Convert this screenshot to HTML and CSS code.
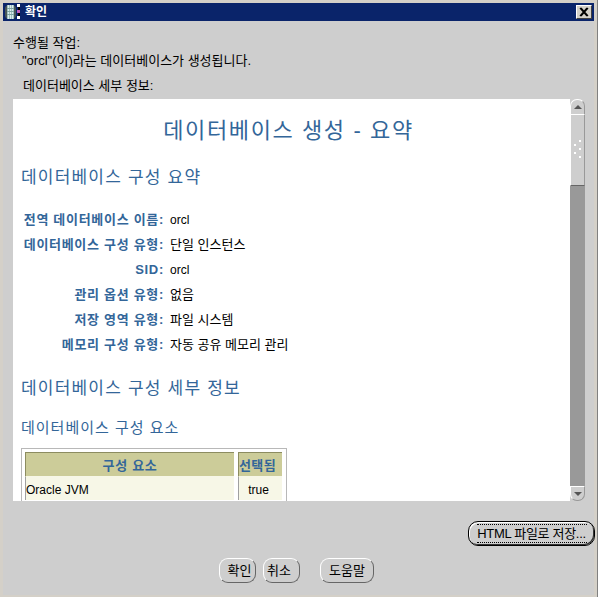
FILE: index.html
```html
<!DOCTYPE html>
<html lang="ko">
<head>
<meta charset="utf-8">
<title>확인</title>
<link rel="stylesheet" href="styles.css">
</head>
<body>
<div class="window">
  <div class="titlebar">
    <svg class="app-icon" width="18" height="18" viewBox="0 0 18 18">
      <rect x="0" y="2" width="11" height="14" rx="4" fill="#4a5656"/>
      <rect x="2" y="2" width="7" height="14" fill="#9fc0be"/>
      <path d="M3.500 2v14M5.500 2v14M7.500 2v14" stroke="#dcecec" stroke-width="1"/>
      <path d="M2 5.500h7M2 8.500h7M2 11.500h7" stroke="#7fa5a3" stroke-width="1"/>
      <rect x="12" y="1" width="3" height="3" fill="#fff"/>
      <rect x="12" y="7" width="3" height="3" fill="#c060c0"/>
      <rect x="12" y="13" width="3" height="3" fill="#fff"/>
      <rect x="13" y="4" width="2" height="3" fill="#000"/>
      <rect x="13" y="10" width="2" height="3" fill="#000"/>
    </svg>
    <span class="title">확인</span>
    <span class="close">
      <svg width="12" height="10" viewBox="0 0 12 10"><path d="M2 1l7 8M3 1l7 8M9 1L2 9M10 1L3 9" stroke="#000" stroke-width="1.2" fill="none"/></svg>
    </span>
  </div>
  <div class="body">
    <div class="intro">
      <p class="intro-line">수행될 작업:</p>
      <p class="intro-line indent">"orcl"(이)라는 데이터베이스가 생성됩니다.</p>
      <p class="intro-line details">데이터베이스 세부 정보:</p>
    </div>
    <div class="viewer">
      <div class="doc">
        <h1 class="doc-title">데이터베이스 생성 - 요약</h1>
        <h2 class="section first">데이터베이스 구성 요약</h2>
        <dl class="summary">
          <dt>전역 데이터베이스 이름:</dt><dd class="latin">orcl</dd>
          <dt>데이터베이스 구성 유형:</dt><dd>단일 인스턴스</dd>
          <dt>SID:</dt><dd class="latin">orcl</dd>
          <dt>관리 옵션 유형:</dt><dd>없음</dd>
          <dt>저장 영역 유형:</dt><dd>파일 시스템</dd>
          <dt>메모리 구성 유형:</dt><dd>자동 공유 메모리 관리</dd>
        </dl>
        <h2 class="section second">데이터베이스 구성 세부 정보</h2>
        <h3 class="subsection">데이터베이스 구성 요소</h3>
        <div class="table-frame">
          <table class="components">
            <tr><th class="col-name">구성 요소</th><th class="col-sel">선택됨</th></tr>
            <tr><td>Oracle JVM</td><td class="center">true</td></tr>
          </table>
        </div>
      </div>
      <div class="scrollbar">
        <div class="sb-btn sb-up"><span class="arrow-up"></span></div>
        <div class="sb-thumb">
          <svg class="grip" width="9" height="20" viewBox="0 0 9 20">
            <path d="M6 0h2v2H6zM1 4h2v2H1zM6 8h2v2H6zM1 12h2v2H1zM6 16h2v2H6z" fill="#fff"/>
          </svg>
        </div>
        <div class="sb-track"></div>
        <div class="sb-btn sb-down"><span class="arrow-down"></span></div>
      </div>
    </div>
    <div class="save-row"><button class="btn btn-save"><span class="focus">HTML 파일로 저장...</span></button></div>
    <div class="action-row">
      <button class="btn btn-ok">확인</button>
      <button class="btn btn-cancel">취소</button>
      <button class="btn btn-help">도움말</button>
    </div>
  </div>
</div>
</body>
</html>
```
FILE: styles.css
```css
* { box-sizing: border-box; }
html, body { margin: 0; padding: 0; }
body {
  width: 598px;
  height: 597px;
  overflow: hidden;
  background: #cecece;
  font-family: "Liberation Sans", "Noto Sans CJK KR", sans-serif;
  font-size: 13px;
  color: #000;
}
.window {
  width: 598px;
  height: 597px;
  padding: 3px 3px 2px 3px;
  background: #d4d0c8;
  border-right: 1px solid #808080;
  display: flex;
  flex-direction: column;
}
.titlebar {
  height: 18px;
  flex: none;
  background: #0a246a;
  color: #fff;
  display: flex;
  align-items: center;
  padding: 0 2px;
}
.app-icon { flex: none; }
.title {
  margin-left: 2px;
  font-size: 12px;
  font-weight: 700;
  line-height: 18px;
}
.close {
  margin-left: auto;
  width: 16px;
  height: 14px;
  background: #d4d0c8;
  border: 1px solid;
  border-color: #fff #404040 #404040 #fff;
  display: flex;
  align-items: center;
  justify-content: center;
}
.body {
  flex: 1;
  background: #cecece;
  display: flex;
  flex-direction: column;
  min-height: 0;
}
.intro { padding: 13px 0 0 10px; height: 78px; }
.intro-line { margin: 0; line-height: 18px; font-size: 13px; }
.indent { padding-left: 9px; }
.details { padding-left: 10px; margin-top: 7px; }
.viewer {
  margin-left: 10px;
  width: 572px;
  height: 402px;
  flex: none;
  display: flex;
  background: #fff;
}
.doc {
  flex: 1;
  min-width: 0;
  overflow: hidden;
  padding-left: 8px;
}
.doc-title {
  margin: 17px 14px 0 0;
  font-size: 22px;
  font-weight: 400;
  line-height: 30px;
  text-align: center;
  color: #336699;
  letter-spacing: 1.6px;
}
.section {
  margin: 0;
  font-size: 17px;
  font-weight: 400;
  line-height: 22px;
  color: #336699;
  letter-spacing: 1.2px;
}
.section.first { margin-top: 21px; }
.section.second { margin-top: 21px; }
.summary {
  margin: 18px 0 0;
  display: grid;
  grid-template-columns: 143px 1fr;
  column-gap: 6px;
  grid-auto-rows: 25px;
  align-items: center;
}
.summary dt {
  text-align: right;
  font-weight: 700;
  color: #336699;
  line-height: 25px;
  white-space: nowrap;
  letter-spacing: 0.7px;
}
.summary dd { margin: 0; line-height: 25px; }
.summary .latin { font-size: 12px; padding-top: 1px; }
.subsection {
  margin: 17px 0 0;
  font-size: 15px;
  font-weight: 400;
  line-height: 22px;
  color: #336699;
  letter-spacing: 1px;
}
.table-frame {
  margin-top: 9px;
  width: 266px;
  border: 1px solid #b8b8b8;
  padding: 3px 4px;
}
.components { border-collapse: separate; border-spacing: 4px 0; margin: 0 -5px; width: 265px; table-layout: fixed; }
.components th {
  height: 25px;
  background: #cccc99;
  color: #336699;
  font-size: 13px;
  font-weight: 700;
  border-top: 1px solid #8c8c60;
  border-left: 1px solid #8c8c60;
  border-bottom: 1px solid #f7f7e7;
  padding: 0;
}
.col-name { width: 209px; letter-spacing: 0.7px; padding-right: 4px; }
.components .col-sel { width: 44px; letter-spacing: 0.4px; white-space: nowrap; padding-right: 6px; }
.components td {
  height: 23px;
  background: #f7f7e7;
  border-left: 1px solid #a0a0a0;
  padding: 3px 0 0;
  font-size: 12px;
}
.components .center { text-align: center; padding-right: 4px; }
.scrollbar {
  width: 15px;
  flex: none;
  display: flex;
  flex-direction: column;
  background: #cecece;
}
.sb-btn {
  height: 15px;
  flex: none;
  background: #cecece;
  display: flex;
  align-items: center;
  justify-content: center;
}
.sb-up {
  border: 1px solid #999;
  border-left-color: #fff;
  border-top-color: #fff;
  border-bottom: 0;
  border-radius: 7px 7px 0 0;
}
.sb-down {
  border: 1px solid #999;
  border-top-color: #fff;
  border-left-color: #fff;
  border-radius: 0 0 7px 7px;
}
.arrow-up { border: 4px solid transparent; border-top: 0; border-bottom: 4px solid #555; }
.arrow-down { border: 4px solid transparent; border-bottom: 0; border-top: 4px solid #555; }
.sb-thumb {
  height: 72px;
  flex: none;
  background: #cecece;
  border-top: 1px solid #fff;
  border-left: 1px solid #fff;
  border-right: 1px solid #999;
  border-bottom: 1px solid #666;
  display: flex;
  align-items: center;
  justify-content: center;
}
.sb-track { flex: 1; background: #999; }
.save-row {
  display: flex;
  justify-content: flex-end;
  padding-top: 20px;
}
.btn {
  font-family: inherit;
  font-size: 13px;
  color: #000;
  background: #cecece;
  border: 1px solid;
  border-color: #fff #666 #666 #fff;
  border-radius: 9px;
  padding: 0;
  height: 25px;
  line-height: 1;
}
.btn-save {
  width: 127px;
  margin-right: -1px;
  border: 1px solid #000;
  border-radius: 10px;
  box-shadow: inset -1px -1px 0 #333, inset 1px 1px 0 #fff;
}
.focus { border-top: 1px dotted #000; border-bottom: 1px dotted #000; padding: 1px 0; display: inline-block; width: 110px; white-space: nowrap; line-height: 15px; letter-spacing: -0.3px; }
.action-row {
  display: flex;
  padding: 12px 0 0 216px;
}
.btn-ok { width: 37px; padding-left: 4px; }
.btn-cancel { width: 37px; margin-left: 7px; padding-right: 5px; }
.btn-help { width: 54px; margin-left: 20px; }
```
